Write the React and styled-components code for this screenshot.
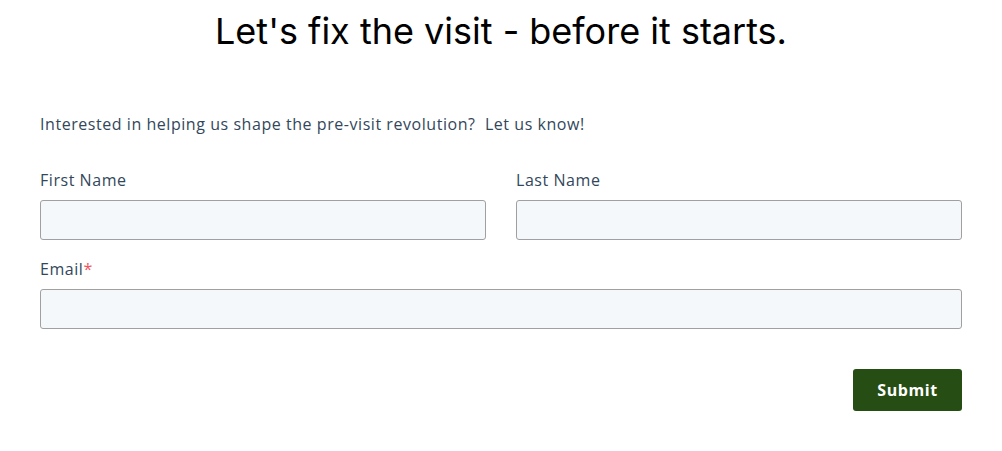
import React from "react";
import styled, { createGlobalStyle } from "styled-components";

const Global = createGlobalStyle`
  html, body { margin: 0; padding: 0; background: #fff; }
  * { box-sizing: border-box; }
`;

const Page = styled.div`
  width: 1002px;
  padding: 8px 40px 0;
`;

const Title = styled.h1`
  margin: 0;
  font-family: Inter, "Liberation Sans", sans-serif;
  font-weight: 400;
  font-size: 36px;
  line-height: 46px;
  color: #000;
  text-align: center;
`;

const Form = styled.form`
  margin-top: 58px;
  display: flex;
  flex-direction: column;
  font-family: "Open Sans", sans-serif;
  letter-spacing: 0.55px;
`;

const Intro = styled.p`
  margin: 0 0 34px;
  font-size: 16px;
  line-height: 24px;
  color: #33475b;
`;

const Row = styled.div`
  display: grid;
  grid-template-columns: ${(p) => (p.$cols === 2 ? "1fr 1fr" : "1fr")};
  column-gap: 30px;
  margin-bottom: 19px;
`;

const Field = styled.div`
  display: flex;
  flex-direction: column;
`;

const Label = styled.label`
  font-size: 16px;
  line-height: 20px;
  color: #33475b;
  margin-bottom: 10px;
`;

const Req = styled.span`
  color: #f2545b;
`;

const Input = styled.input`
  height: 40px;
  width: 100%;
  background: #f5f8fa;
  border: 1px solid #a0a0a0;
  border-radius: 3px;
  padding: 0 10px;
  font-size: 15px;
`;

const Actions = styled.div`
  display: flex;
  justify-content: flex-end;
  margin-top: 21px;
`;

const Submit = styled.button`
  width: 109px;
  height: 42px;
  background: #264d14;
  color: #fff;
  border: none;
  border-radius: 3px;
  font-family: "Open Sans", sans-serif;
  letter-spacing: 0.55px;
  font-weight: 700;
  font-size: 16px;
`;

export default function App() {
  return (
    <Page>
      <Global />
      <Title>Let's fix the visit - before it starts.</Title>
      <Form onSubmit={(e) => e.preventDefault()}>
        <Intro>Interested in helping us shape the pre-visit revolution?&nbsp; Let us know!</Intro>
        <Row $cols={2}>
          <Field>
            <Label>First Name</Label>
            <Input />
          </Field>
          <Field>
            <Label>Last Name</Label>
            <Input />
          </Field>
        </Row>
        <Row>
          <Field>
            <Label>
              Email<Req>*</Req>
            </Label>
            <Input />
          </Field>
        </Row>
        <Actions>
          <Submit type="submit">Submit</Submit>
        </Actions>
      </Form>
    </Page>
  );
}
